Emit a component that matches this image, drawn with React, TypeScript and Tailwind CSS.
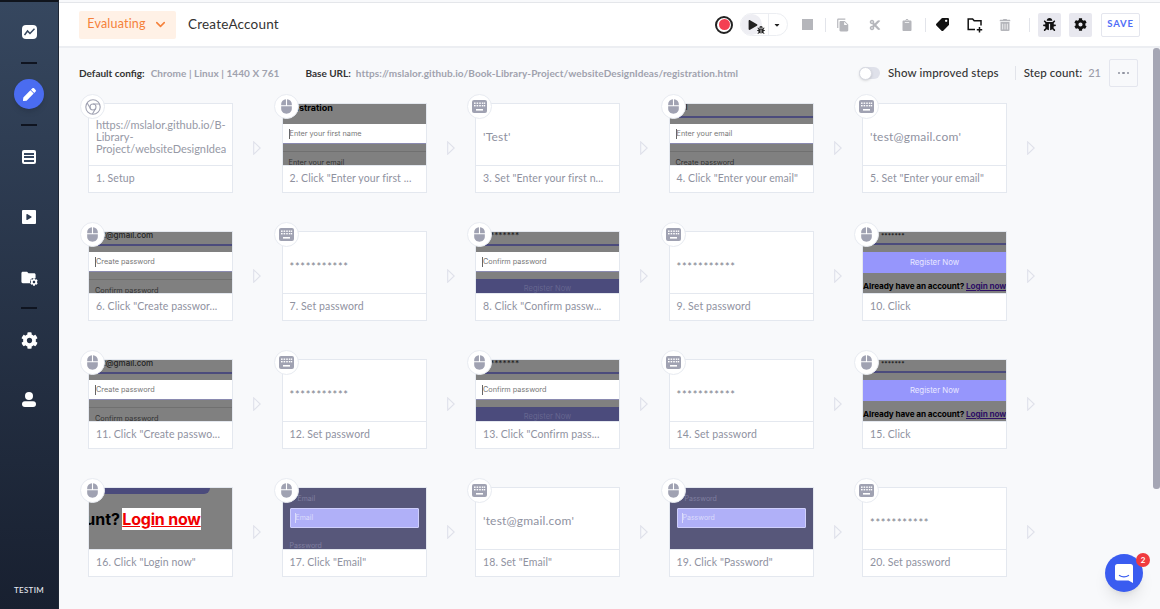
import { FaBug, FaCog, FaCut, FaPen, FaTag, FaTrashAlt, FaClipboard, FaCaretDown, FaPlay } from "react-icons/fa";
import { MdFileCopy, MdFolder } from "react-icons/md";
import { FiChevronDown } from "react-icons/fi";

type Step = {
  caption: string;
  kind: "setup" | "text" | "field" | "register" | "login" | "modal";
  value?: string;
  top?: string;
  label?: string;
  below?: string;
  purple?: boolean;
  mono?: boolean;
};

const createStep = (n: number): Step => ({
  caption: `${n}. Click "Create passw${n === 6 ? "or" : "o"}...`,
  kind: "field",
  top: "t@gmail.com",
  label: "Create password",
  below: "Confirm password",
});

const confirmStep = (n: number): Step => ({
  caption: n === 8 ? `8. Click "Confirm passw...` : `13. Click "Confirm pass...`,
  kind: "field",
  top: "*******",
  label: "Confirm password",
  below: "Register Now",
  purple: true,
});

const steps: Step[] = [
  { caption: "1. Setup", kind: "setup" },
  { caption: `2. Click "Enter your first ...`, kind: "field", top: "istration", label: "Enter your first name", below: "Enter your email" },
  { caption: `3. Set "Enter your first n...`, kind: "text", value: "'Test'" },
  { caption: `4. Click "Enter your email"`, kind: "field", top: "il", label: "Enter your email", below: "Create password" },
  { caption: `5. Set "Enter your email"`, kind: "text", value: "'test@gmail.com'" },
  createStep(6),
  { caption: "7. Set password", kind: "text", value: "***********", mono: true },
  confirmStep(8),
  { caption: "9. Set password", kind: "text", value: "***********", mono: true },
  { caption: "10. Click", kind: "register" },
  createStep(11),
  { caption: "12. Set password", kind: "text", value: "***********", mono: true },
  confirmStep(13),
  { caption: "14. Set password", kind: "text", value: "***********", mono: true },
  { caption: "15. Click", kind: "register" },
  { caption: `16. Click "Login now"`, kind: "login" },
  { caption: `17. Click "Email"`, kind: "modal", top: "Email", label: "Email", below: "Password" },
  { caption: `18. Set "Email"`, kind: "text", value: "'test@gmail.com'" },
  { caption: `19. Click "Password"`, kind: "modal", top: "Password", label: "Password" },
  { caption: "20. Set password", kind: "text", value: "***********", mono: true },
];

function MouseIcon() {
  return (
    <svg width="11" height="15" viewBox="0 0 12 16">
      <path d="M5.4 0.2C2.4 0.5 0.2 2.6 0.2 5.4V6.6H5.4Z M6.6 0.2C9.6 0.5 11.8 2.6 11.8 5.4V6.6H6.6Z M0.2 7.6H11.8V10.4C11.8 13.6 9.2 15.8 6 15.8S0.2 13.6 0.2 10.4Z" fill="#a0a2b2" />
    </svg>
  );
}

function KeyboardIcon() {
  return (
    <svg width="15" height="13" viewBox="0 0 15 13">
      <rect width="15" height="13" rx="2" fill="#a0a2b2" />
      <g fill="#fff">
        <rect x="2" y="2.5" width="1.6" height="1.4" />
        <rect x="4.6" y="2.5" width="1.6" height="1.4" />
        <rect x="7.2" y="2.5" width="1.6" height="1.4" />
        <rect x="9.8" y="2.5" width="1.6" height="1.4" />
        <rect x="12" y="2.5" width="1.2" height="1.4" />
        <rect x="2" y="5" width="1.6" height="1.4" />
        <rect x="4.6" y="5" width="1.6" height="1.4" />
        <rect x="7.2" y="5" width="1.6" height="1.4" />
        <rect x="9.8" y="5" width="1.6" height="1.4" />
        <rect x="12" y="5" width="1.2" height="1.4" />
        <rect x="4" y="9" width="7" height="1.6" />
      </g>
    </svg>
  );
}

function ChromeIcon() {
  return (
    <svg width="16" height="16" viewBox="0 0 16 16" fill="none" stroke="#a0a2b2" strokeWidth="1.1">
      <circle cx="8" cy="8" r="7.2" />
      <circle cx="8" cy="8" r="3" />
      <path d="M8 5H14.4M5.4 9.5L2.2 4M10.6 9.5L7.4 15" />
    </svg>
  );
}

function Preview({ step }: { step: Step }) {
  if (step.kind === "setup") {
    return (
      <div className="h-[61px] bg-white pl-[7px] pt-[15px] text-[11px] leading-[12px] text-[#9699a6] overflow-hidden whitespace-nowrap">
        <div>https://mslalor.github.io/B-</div>
        <div>Library-</div>
        <div>Project/websiteDesignIdea</div>
      </div>
    );
  }
  if (step.kind === "text") {
    return (
      <div className={`h-[61px] bg-white pl-[7px] flex items-center ${step.mono ? "text-[11px] tracking-[0.7px] pt-[9px] text-[#7d808c]" : "text-[12px] tracking-[0.2px] pt-[4px] text-[#8f929f]"}`}>
        {step.value}
      </div>
    );
  }
  if (step.kind === "login") {
    return (
      <div className="h-[61px] bg-[#808080] overflow-hidden">
        <div className="h-[6px] w-[121px] bg-[#4b4b7c] rounded-br-md" />
        <div className="mt-[13px] flex items-center whitespace-nowrap font-['Inter',sans-serif] font-bold text-[16px] text-black">
          <span className="w-[31px] overflow-hidden flex justify-end">
            <span>unt?</span>
          </span>
          <span className="ml-[2px] w-[79px] text-center bg-white text-[#f00000] underline leading-[22px] tracking-[-0.2px]">Login now</span>
        </div>
      </div>
    );
  }
  if (step.kind === "modal") {
    return (
      <div className="h-[61px] bg-[#57577a] overflow-hidden px-[7px] font-['Inter',sans-serif] text-[7px] text-[#807fa0]">
        <div className="pl-2 pt-[6px] leading-[10px]">{step.top}</div>
        <div className="mt-[4px] h-[20px] border border-[#cfcffc] bg-[#b0b0f8] rounded-[1px] flex items-center pl-1 text-[#dcdcfc]">
          <span className="border-l border-[#dcdcfc] leading-[10px]">{step.label}</span>
        </div>
        <div className="mt-[13px] leading-[10px]">{step.below}</div>
      </div>
    );
  }
  if (step.kind === "register") {
    return (
      <div className="h-[61px] bg-[#808080] overflow-hidden font-['Inter',sans-serif]">
        <div className="h-[20px] pl-[18px] text-[6px] leading-[7px] text-[#222] font-bold relative">
          *******
          <div className="absolute left-0 right-0 top-[11px] h-[2px] bg-[#4b4b7c]" />
        </div>
        <div className="h-[21px] bg-[#9696fc] flex items-center justify-center text-[7.8px] text-[#e8e8ff]">Register Now</div>
        <div className="mt-[8px] text-[8.2px] font-bold leading-[10px] whitespace-nowrap text-black tracking-[-0.1px]">
          Already have an account? <span className="text-[#2e1065] underline">Login now</span>
        </div>
      </div>
    );
  }
  return (
    <div className="h-[61px] bg-[#808080] overflow-hidden font-['Inter',sans-serif]">
      <div className="h-[20px] pl-[14px] relative text-[8px] leading-[7px] font-medium text-[#222] overflow-hidden">
        <span className={step.top === "istration" ? "text-black text-[9px] font-bold" : ""}>{step.top}</span>
        {step.top !== "istration" && <div className="absolute left-0 right-0 top-[12px] h-[2px] bg-[#4b4b7c]" />}
      </div>
      <div className="h-[20px] bg-white flex items-center pl-[6px] pt-[1px] text-[7.3px] text-[#777] border-b border-[#8a8ab0]">
        <span className="border-l border-[#666] leading-[10px]">{step.label}</span>
      </div>
      {step.purple ? (
        <div className="mt-[7px] h-[14px] bg-[#4b4b7c] text-center text-[7.5px] text-[#666690] leading-[20px]">{step.below}</div>
      ) : (
        <div className="mt-[7px] h-[14px] border-t border-[#707070] pl-[6px] text-[7.3px] leading-[21px] text-[#333]">{step.below}</div>
      )}
    </div>
  );
}

function StepCard({ step }: { step: Step }) {
  const isKeyboard = step.kind === "text";
  return (
    <div className="flex items-center">
      <div className="relative w-[145px] h-[90px] border border-[#e4e8ef] bg-white shrink-0">
        <Preview step={step} />
        <div className="h-[27px] border-t border-[#e4e8ef] pl-[7px] flex items-center text-[10.5px] tracking-[0.1px] text-[#8f929f] whitespace-nowrap overflow-hidden">
          {step.caption}
        </div>
        <div className="absolute -left-[9px] -top-[10px] w-[25px] h-[25px] rounded-full bg-white border border-[#e8ebf1] flex items-center justify-center">
          {step.kind === "setup" ? <ChromeIcon /> : isKeyboard ? <KeyboardIcon /> : <MouseIcon />}
        </div>
      </div>
      <div className="flex-1 flex justify-center">
        <svg width="8" height="14" viewBox="0 0 8 14" fill="none">
          <path d="M0.7 0.8L7.2 7L0.7 13.2Z" stroke="#dfe1ea" strokeWidth="1.1" />
        </svg>
      </div>
    </div>
  );
}

function SideRule() {
  return <div className="w-[16px] h-[2px] bg-[#0f1420]" />;
}

function Sidebar() {
  return (
    <aside className="w-[59px] h-full shrink-0 flex flex-col items-center bg-gradient-to-b from-[#36475f] to-[#182030] border-t-2 border-[#10141c] border-r border-r-[#1f2735]">
      <div className="mt-[23px] w-[15px] h-[14px] rounded-[4px] bg-white flex items-center justify-center">
        <svg width="11" height="8" viewBox="0 0 11 8" fill="none" stroke="#36475f" strokeWidth="1.5">
          <path d="M0.5 7L3.5 3L6 5.5L10.5 0.8" />
        </svg>
      </div>
      <div className="mt-[23px]"><SideRule /></div>
      <div className="mt-[15px] w-[30px] h-[30px] rounded-full bg-[#4a6cf0] shadow-md flex items-center justify-center text-white">
        <FaPen size={13} />
      </div>
      <div className="mt-[15px]"><SideRule /></div>
      <div className="mt-[24px] w-[14px] h-[14px] rounded-[2px] bg-white flex flex-col items-center justify-center gap-[1.5px]">
        <div className="w-[10px] h-[2px] bg-[#36475f]" />
        <div className="w-[10px] h-[2px] bg-[#36475f]" />
        <div className="w-[10px] h-[2px] bg-[#36475f]" />
      </div>
      <div className="mt-[46px] w-[14px] h-[14px] rounded-[1px] bg-white flex items-center justify-center text-[#2c3a50]">
        <FaPlay size={6} />
      </div>
      <div className="mt-[46px] relative w-[16px] h-[15px] text-white">
        <MdFolder size={17} className="-ml-[1px] -mt-[1px]" />
        <FaCog size={8} className="absolute -right-[1px] -bottom-[1px] bg-[#27344a] rounded-full" />
      </div>
      <div className="mt-[22px]"><SideRule /></div>
      <div className="mt-[23px] text-white"><FaCog size={17} /></div>
      <div className="mt-[43px]">
        <svg width="14" height="15" viewBox="0 0 14 15" fill="#fff">
          <circle cx="7" cy="4" r="4" />
          <rect x="0" y="9.2" width="14" height="5.8" rx="2.9" />
        </svg>
      </div>
      <div className="mt-auto mb-[13px] text-[8px] tracking-[0.3px] font-medium text-[#e6e9f0]">TESTIM</div>
    </aside>
  );
}

function ToolDivider() {
  return <div className="w-px h-[14px] bg-[#e2e4ea]" />;
}

function Toolbar() {
  return (
    <header className="h-[46px] mt-[2px] bg-white border-t border-[#e4e6ea] border-b-2 border-b-[#eceef2] flex items-center pl-[20px] pr-[20px]">
      <div className="w-[97px] h-[28px] rounded-[2px] bg-[#fff1e6] flex items-center justify-center gap-[7px] text-[12.5px] tracking-[0.2px] text-[#f5813b]">
        Evaluating
        <FiChevronDown size={15} strokeWidth={2.5} />
      </div>
      <div className="ml-[12px] text-[13.5px] tracking-[0.2px] text-[#333]">CreateAccount</div>

      <div className="ml-auto flex items-center">
        <div className="w-[18px] h-[18px] rounded-full border-[2px] border-[#222] bg-white flex items-center justify-center">
          <div className="w-[11px] h-[11px] rounded-full bg-[#f43f52]" />
        </div>
        <div className="ml-[7px] w-[48px] h-[23px] rounded-full border border-[#eceef2] flex items-center">
          <div className="relative w-[21px] h-[21px] rounded-full bg-[#eeeef3] flex items-center justify-center text-[#222]">
            <FaPlay size={10} className="ml-[3px]" />
            <FaBug size={8} className="absolute -right-[3px] bottom-[1px]" />
          </div>
          <div className="ml-[6px] w-px h-[22px] bg-[#eceef2]" />
          <FaCaretDown size={8} className="ml-[4px] text-[#222]" />
        </div>
        <div className="ml-[14px] w-[11px] h-[11px] bg-[#b5b6bb]" />
        <div className="ml-[12px]"><ToolDivider /></div>
        <MdFileCopy size={14} className="ml-[10px] text-[#b5b6bb]" />
        <FaCut size={12} className="ml-[19px] text-[#b5b6bb]" />
        <FaClipboard size={12} className="ml-[20px] text-[#b5b6bb]" />
        <div className="ml-[12px]"><ToolDivider /></div>
        <FaTag size={13} className="ml-[10px] text-[#111] rotate-90" />
        <svg width="16" height="16" viewBox="0 0 16 16" fill="none" stroke="#111" strokeWidth="1.5" className="ml-[18px]">
          <path d="M8 12.5H1.2V2H5.6L7.2 3.8H14V8.5" />
          <path d="M12.5 10V15.5M9.8 12.8H15.2" />
        </svg>
        <FaTrashAlt size={12} className="ml-[16px] text-[#b5b6bb]" />
        <div className="ml-[18px]"><ToolDivider /></div>
        <div className="ml-[8px] w-[23px] h-[24px] rounded-[2px] bg-[#e8e8ef] flex items-center justify-center text-[#111]">
          <FaBug size={13} />
        </div>
        <div className="ml-[8px] w-[23px] h-[24px] rounded-[2px] bg-[#e8e8ef] flex items-center justify-center text-[#111]">
          <FaCog size={13} />
        </div>
        <div className="ml-[9px] w-[39px] h-[24px] rounded-[2px] border border-[#e4e6ee] flex items-center justify-center text-[9.5px] font-bold tracking-[0.8px] text-[#4f6ef7]">
          SAVE
        </div>
      </div>
    </header>
  );
}

function InfoRow() {
  return (
    <div className="h-[28px] mt-[11px] flex items-center pl-[20px] pr-[15px] text-[10px] font-bold text-[#a0a2ae] whitespace-nowrap">
      <span className="text-[#333]">Default config:</span>
      <span className="ml-[6px] tracking-[0.08px]">Chrome | Linux | 1440 X 761</span>
      <span className="ml-[26px] text-[#333]">Base URL:</span>
      <span className="ml-[5px] tracking-[0.08px]">https://mslalor.github.io/Book-Library-Project/websiteDesignIdeas/registration.html</span>
      <div className="ml-auto flex items-center">
        <div className="w-[21px] h-[12px] rounded-full bg-[#dfe1ea] relative">
          <div className="absolute left-0 -top-[0.5px] w-[13px] h-[13px] rounded-full bg-white border border-[#d8dae2] shadow-sm" />
        </div>
        <span className="ml-[8px] text-[11.5px] font-medium tracking-[0.15px] text-[#333]">Show improved steps</span>
        <div className="ml-[16px] w-px h-[14px] bg-[#e2e4ea]" />
        <span className="ml-[8px] text-[11.5px] font-medium tracking-[0.1px] text-[#333]">Step count:</span>
        <span className="ml-[6px] text-[11px] font-medium text-[#9a9ca8]">21</span>
        <div className="ml-[8px] w-[29px] h-[28px] rounded-[2px] border border-[#e4e6ee] flex items-center justify-center gap-[2px]">
          <div className="w-[2.5px] h-[2.5px] rounded-full bg-[#8f929f]" />
          <div className="w-[2.5px] h-[2.5px] rounded-full bg-[#8f929f]" />
          <div className="w-[2.5px] h-[2.5px] rounded-full bg-[#8f929f]" />
        </div>
      </div>
    </div>
  );
}

export default function App() {
  return (
    <div className="relative w-[1160px] h-[609px] overflow-hidden flex bg-[#f8f9fb] font-['Lato',sans-serif]">
      <Sidebar />
      <main className="flex-1 min-w-0 flex flex-col">
        <Toolbar />
        <div className="flex-1 flex min-h-0">
          <div className="flex-1 min-w-0">
            <InfoRow />
            <div className="mt-[16px] ml-[29px] grid grid-cols-[repeat(5,193.5px)] gap-y-[38px]">
              {steps.map((step) => (
                <StepCard key={step.caption} step={step} />
              ))}
            </div>
          </div>
          <div className="w-[7px] shrink-0">
            <div className="h-[441px] bg-[#a5a6b4] rounded-[3px]" />
          </div>
        </div>
      </main>

      <div className="absolute left-[1105px] top-[554px] w-[38px] h-[38px] rounded-full bg-[#3a5cf0] shadow-lg flex items-center justify-center">
        <svg width="18" height="19" viewBox="0 0 18 19">
          <path d="M2.5 0H15.5A2.5 2.5 0 0 1 18 2.5V19L13.5 16.5H2.5A2.5 2.5 0 0 1 0 14V2.5A2.5 2.5 0 0 1 2.5 0Z" fill="#fff" />
          <path d="M4 11.2C7 13.2 11 13.2 14 11.2" stroke="#3a5cf0" strokeWidth="1.2" fill="none" />
        </svg>
        <div className="absolute -right-[7px] -top-[1px] w-[14px] h-[14px] rounded-full bg-[#f03a3f] text-white text-[8px] font-bold flex items-center justify-center">
          2
        </div>
      </div>
    </div>
  );
}
